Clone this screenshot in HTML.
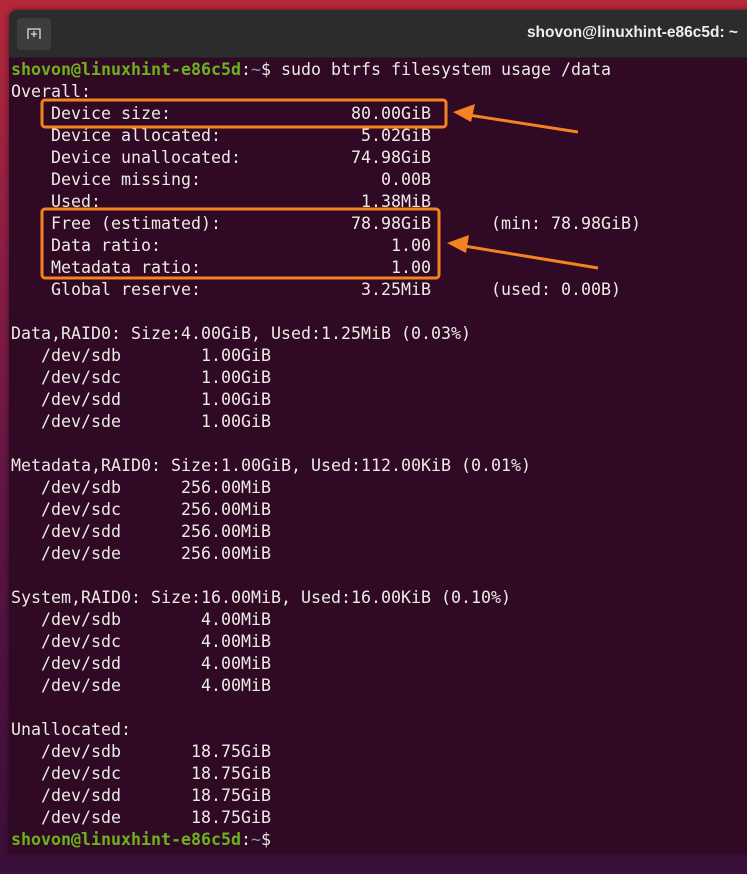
<!DOCTYPE html>
<html><head><meta charset="utf-8"><style>
html,body{margin:0;padding:0}
body{width:747px;height:874px;overflow:hidden;position:relative;
background:linear-gradient(180deg,#b3283a 0%,#8a1d45 30%,#5c1444 60%,#3a0f3a 100%);}
.win{position:absolute;left:9px;top:10px;width:750px;height:843px;background:#300a24;border-radius:8px 0 0 0;overflow:hidden;box-shadow:0 0 6px rgba(0,0,0,.5)}
.hdr{position:absolute;left:0;top:0;right:0;height:47px;background:#2c2c2c;border-bottom:1px solid #222}
.btn{position:absolute;left:8px;top:8px;width:34px;height:32px;background:#3d3d3d;border-radius:4px}
.title{position:absolute;right:21px;top:14px;color:#eee;font:bold 15.5px "Liberation Sans","DejaVu Sans",sans-serif}
pre{position:absolute;left:2px;top:49px;margin:0;font:16.62px/22px "DejaVu Sans Mono","Liberation Mono",monospace;color:#eceae6}
.g{color:#6cb21d;font-weight:bold}.b{color:#8896c0}
</style></head><body>
<div class="win">
<div class="hdr"><div class="btn"><svg width="34" height="32" viewBox="0 0 34 32"><path d="M11 21V11h12v10M14 16h6M17 13v6" stroke="#ddd" stroke-width="1.3" fill="none"/></svg></div>
<div class="title">shovon@linuxhint-e86c5d: ~</div></div>
<pre><span class="g">shovon@linuxhint-e86c5d</span>:<span class="b">~</span>$ sudo btrfs filesystem usage /data
Overall:
    Device size:                  80.00GiB
    Device allocated:              5.02GiB
    Device unallocated:           74.98GiB
    Device missing:                  0.00B
    Used:                          1.38MiB
    Free (estimated):             78.98GiB      (min: 78.98GiB)
    Data ratio:                       1.00
    Metadata ratio:                   1.00
    Global reserve:                3.25MiB      (used: 0.00B)

Data,RAID0: Size:4.00GiB, Used:1.25MiB (0.03%)
   /dev/sdb        1.00GiB
   /dev/sdc        1.00GiB
   /dev/sdd        1.00GiB
   /dev/sde        1.00GiB

Metadata,RAID0: Size:1.00GiB, Used:112.00KiB (0.01%)
   /dev/sdb      256.00MiB
   /dev/sdc      256.00MiB
   /dev/sdd      256.00MiB
   /dev/sde      256.00MiB

System,RAID0: Size:16.00MiB, Used:16.00KiB (0.10%)
   /dev/sdb        4.00MiB
   /dev/sdc        4.00MiB
   /dev/sdd        4.00MiB
   /dev/sde        4.00MiB

Unallocated:
   /dev/sdb       18.75GiB
   /dev/sdc       18.75GiB
   /dev/sdd       18.75GiB
   /dev/sde       18.75GiB
<span class="g">shovon@linuxhint-e86c5d</span>:<span class="b">~</span>$</pre>
</div>
<svg style="position:absolute;left:0;top:0" width="747" height="874">
<g fill="none" stroke="#f58220" stroke-width="3">
<rect x="42" y="100" width="404" height="27" rx="3"/>
<rect x="42" y="209" width="397" height="69" rx="3"/>
<path d="M578 132L462 114"/>
<path d="M598 268L458 245"/>
</g>
<g fill="#f58220">
<path d="M453 112L475 104L471 122Z"/>
<path d="M447 243L469 235L466 253Z"/>
</g>
</svg>
</body></html>
